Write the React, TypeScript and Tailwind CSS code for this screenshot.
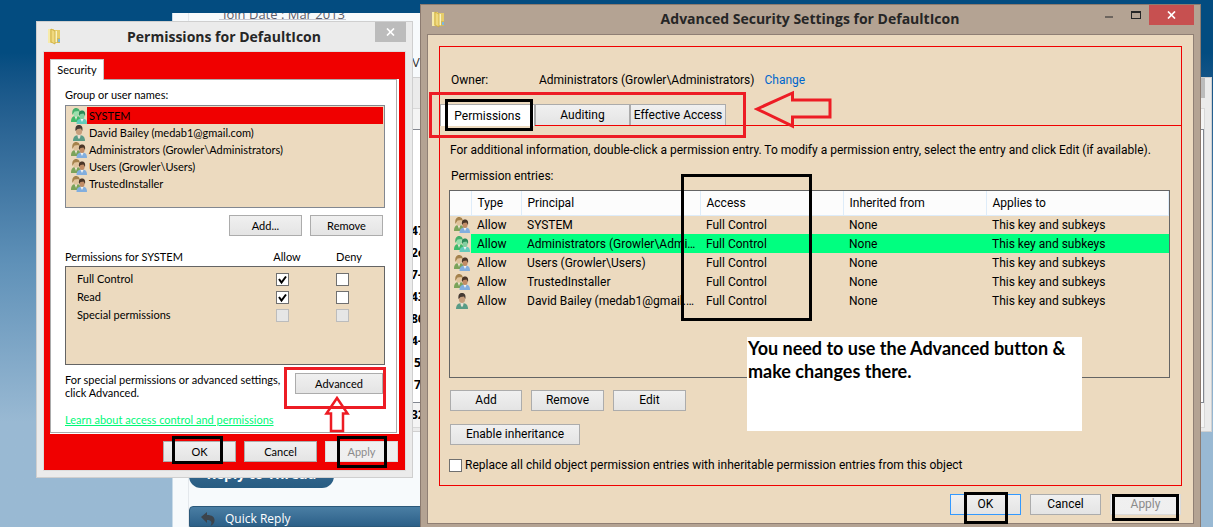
import React from "react"
import { clsx } from "clsx"

const PRINCIPALS = [
  { name: "SYSTEM", tint: "green" },
  { name: "David Bailey (medab1@gmail.com)", single: true },
  { name: "Administrators (Growler\\Administrators)" },
  { name: "Users (Growler\\Users)" },
  { name: "TrustedInstaller" },
]

const PERMISSIONS = [
  { name: "Full Control", allow: true },
  { name: "Read", allow: true },
  { name: "Special permissions", disabled: true },
]

const ENTRIES = [
  { principal: "SYSTEM" },
  { principal: "Administrators (Growler\\Administrators)", selected: true },
  { principal: "Users (Growler\\Users)" },
  { principal: "TrustedInstaller" },
  { principal: "David Bailey (medab1@gmail.com)", single: true },
]

const REGISTRY_VALUES = ["47", "2e", "7-", "43", "86", "4-", " 5", " 7"]

const FolderIcon = () => (
  <svg width="14" height="17" viewBox="0 0 14 17" aria-hidden="true">
    <path d="M1 1h6v14H1z" fill="#ecd77c" />
    <path d="M1 1h2v14H1z" fill="#f7ebaa" />
    <path d="M7 2h6v13H7z" fill="#e6cd6a" />
    <path d="M8 3h2v11H8z" fill="#fbf3c0" />
    <path d="M4 1l4 2v13l-4-2z" fill="#f0d97e" stroke="#c9a83b" strokeWidth=".8" />
    <path d="M10 10h3v5h-3z" fill="#d3b95a" />
    <path d="M11 11h2v3h-2z" fill="#7fb7dc" />
  </svg>
)

interface UserIconProps {
  single?: boolean
  green?: boolean
}

const UserIcon: React.FC<UserIconProps> = ({ single, green }) =>
  single ? (
    <svg width="16" height="16" viewBox="0 0 16 16" aria-hidden="true">
      <path d="M2 16c0-4 2-6 6-6s6 2 6 6z" fill="#5a9c86" />
      <path d="M6 9h4l-1 4-1 1-1-1z" fill="#e8e0d2" />
      <ellipse cx="8" cy="5.500" rx="3.200" ry="4.500" fill="#c79f7d" />
      <path d="M4.500 6C4 1.500 5.500 0 8 0c3 0 4 2.500 3.300 6L10 3.500 6.500 4z" fill="#453a33" />
    </svg>
  ) : (
    <svg width="16" height="16" viewBox="0 0 16 16" aria-hidden="true">
      <path d="M0 14c0-5 2-6 5-6s5 1 5 6z" fill={green ? "#3fb968" : "#7ba35a"} />
      <path d="M3.500 8h3l-1.500 4z" fill="#eee7d8" />
      <ellipse cx="5" cy="4.800" rx="2.800" ry="4" fill={green ? "#9be0ac" : "#e0c39c"} />
      <path d="M1.300 7C.8 2 2.500 0 5 0s4.500 2 3.700 6L7.500 3 3.500 3.500z" fill={green ? "#45b06c" : "#a5824c"} />
      <path d="M5.500 16c0-4 2-5.500 5.500-5.500s5 1.500 5 5.500z" fill={green ? "#62cbbb" : "#82aede"} />
      <path d="M9.500 11h3L11 14z" fill="#f2f2f2" />
      <ellipse cx="11" cy="7.500" rx="2.600" ry="3.600" fill={green ? "#83cfa0" : "#c18c66"} />
      <path d="M8 8c-.6-4 .8-5.500 3-5.500s3.700 1.500 3 5.500l-1.500-2.500-3 .5z" fill={green ? "#2b8a58" : "#4a3628"} />
    </svg>
  )

const CloseIcon = () => (
  <svg width="9" height="8" viewBox="0 0 9 8" aria-hidden="true">
    <path d="M1 .5l7 7M8 .5l-7 7" stroke="#fff" strokeWidth="1.700" />
  </svg>
)

const DialogButton: React.FC<React.ComponentProps<"button">> = ({
  className,
  ...props
}) => (
  <button
    type="button"
    className={clsx(
      "h-[21px] shrink-0 border bg-linear-to-b from-[#f0f0f0] to-[#e4e4e4] text-center leading-[19px] disabled:border-[#dadada] disabled:from-[#f0f0f0] disabled:to-[#efefef] disabled:text-[#8b8b8b]",
      className
    )}
    {...props}
  />
)

const Checkbox: React.FC<React.ComponentProps<"input">> = (props) => (
  <span className="relative block size-[13px] shrink-0">
    <input
      type="checkbox"
      className="peer block size-[13px] appearance-none border border-[#707070] bg-white disabled:border-[#bcbcbc] disabled:bg-[#e6e6e6]"
      {...props}
    />
    <svg
      viewBox="0 0 13 13"
      className="pointer-events-none absolute inset-0 hidden peer-checked:block"
      aria-hidden="true"
    >
      <path d="M3 6l2.500 3.500L10 3.500" fill="none" stroke="#000" strokeWidth="2" />
    </svg>
  </span>
)

const ForumPage = () => (
  <div className="absolute top-[13px] right-3 bottom-0 left-[172px] overflow-hidden border-l border-[#c9dbe8] bg-[#f7fafc] font-['Open_Sans',sans-serif]">
    <div className="ml-[15px] flex h-full flex-col border-l border-[#e4e8ec]">
      <div className="ml-[30px] h-[7px] w-[127px] overflow-hidden border-b border-[#c8c8d0]">
        <p className="-mt-1.5 ml-1 text-[13px] leading-[14px] whitespace-nowrap text-[#5d5d6b]">
          Join Date : Mar 2013
        </p>
      </div>
      <p className="mt-[34px] ml-[223px] text-[13px] leading-4 text-[#333]">View</p>
      <button
        type="button"
        className="mt-auto h-7 w-[145px] rounded-b-xl bg-linear-to-b from-[#3b6f97] to-[#285c82] text-sm leading-3 font-bold text-white"
      >
        Reply to Thread
      </button>
      <div className="mt-[18px] flex h-[21px] shrink-0 items-center gap-2.5 rounded-t border border-[#2b5879] bg-linear-to-b from-[#4a7ea4] to-[#2c6088] pt-1 pl-[11px] text-xs text-white">
        <svg width="14" height="14" viewBox="0 0 14 14" aria-hidden="true">
          <path d="M0 5l6-5v3c5 0 8 2 7.500 6-.3 2.500-2 4-4 5 2-3.500 1-6-3.500-6v3z" fill="#3c444c" />
        </svg>
        <span>Quick Reply</span>
      </div>
    </div>
  </div>
)

const RegistryWindow = () => (
  <div className="absolute top-[77px] right-px left-[300px] flex h-[355px] flex-col border border-[#d0d0d0] bg-[#ebebeb] font-['Open_Sans',sans-serif] text-xs">
    <div className="flex h-[30px] shrink-0 justify-end pr-1.5">
      <div className="h-5 w-8 bg-[#bcbcbc]" />
    </div>
    <div className="mr-1.5 flex grow flex-col border border-[#d8d8d8] bg-[#f4f4f4]">
      <div className="mt-5 h-[274px] border border-[#828790] bg-white pt-[90px] pl-[108px] font-bold">
        {REGISTRY_VALUES.map((value) => (
          <p key={value} className="leading-[22px] whitespace-pre">
            {value}
          </p>
        ))}
      </div>
      <p className="pl-[109px] leading-6 font-bold">32</p>
    </div>
    <div className="h-1.5" />
  </div>
)

const PermissionsWindow = () => (
  <section className="absolute top-[21px] left-[36px] w-[377px] border border-[#cfcfcf] bg-[#ebebeb] font-['Lato',sans-serif] text-[11px] text-black">
    <header className="flex h-[29px] items-center pl-2.5">
      <FolderIcon />
      <h1 className="grow pl-3 text-center font-['Open_Sans',sans-serif] text-[14px] font-bold text-[#262626]">
        Permissions for DefaultIcon
      </h1>
      <button
        type="button"
        aria-label="Close"
        className="mr-1.5 flex h-5 w-[31px] items-center justify-center self-start bg-[#bcbcbc]"
      >
        <CloseIcon />
      </button>
    </header>

    <div className="mx-1.5 mb-1.5 border border-[#dcdcdc] bg-[#f00000] px-1.5 pt-[7px] pb-2">
      <div role="tablist" className="relative -mb-px">
        <button
          type="button"
          role="tab"
          aria-selected="true"
          className="block h-[21px] w-[54px] border border-b-0 border-[#c9c9c9] bg-white"
        >
          Security
        </button>
      </div>
      <div className="bg-white pr-0.5 pb-px">
        <div className="border border-[#ababab] pt-2 pr-[11px] pb-[5px] pl-3.5">
          <p className="leading-[14px]">Group or user names:</p>
          <ul className="mt-[3px] h-[103px] border border-[#828790] bg-[#ecdabf] py-px pr-px pl-[5px]">
            {PRINCIPALS.map(({ name, single, tint }) => (
              <li key={name} className="flex h-[17px] items-center">
                <UserIcon single={single} green={tint === "green"} />
                <span className={clsx("grow pl-0.5 leading-[17px]", tint && "bg-[#f00000]")}>
                  {name}
                </span>
              </li>
            ))}
          </ul>
          <div className="mt-[7px] flex justify-end gap-2 pr-0.5">
            <DialogButton className="w-[73px] border-[#acacac]">Add...</DialogButton>
            <DialogButton className="w-[73px] border-[#acacac]">Remove</DialogButton>
          </div>

          <table className="mt-3.5 w-full table-fixed">
            <thead>
              <tr className="h-4 align-top leading-[14px]">
                <th className="text-left font-normal">Permissions for SYSTEM</th>
                <th className="w-[60px] font-normal">Allow</th>
                <th className="w-[68px] pr-1 font-normal">Deny</th>
              </tr>
            </thead>
            <tbody className="bg-[#ecdabf] outline -outline-offset-1 outline-[#646464]">
              <tr className="h-1">
                <td colSpan={3} />
              </tr>
              {PERMISSIONS.map(({ name, allow, disabled }) => (
                <tr key={name} className="h-[18px]">
                  <td className="pl-3">{name}</td>
                  <td className="pl-[19px]">
                    <Checkbox aria-label={`Allow ${name}`} defaultChecked={allow} disabled={disabled} />
                  </td>
                  <td className="pl-[19px]">
                    <Checkbox aria-label={`Deny ${name}`} disabled={disabled} />
                  </td>
                </tr>
              ))}
              <tr className="h-[41px]">
                <td colSpan={3} />
              </tr>
            </tbody>
          </table>

          <div className="mt-2 flex justify-between pr-0.5">
            <p className="leading-[13px]">
              For special permissions or advanced settings,
              <br />
              click Advanced.
            </p>
            <DialogButton className="w-[88px] border-[#acacac]">Advanced</DialogButton>
          </div>
          <a href="#" className="mt-3.5 block leading-[14px] text-[#00f878] underline">
            Learn about access control and permissions
          </a>
        </div>
      </div>
      <div className="mt-[7px] flex justify-end gap-2 pr-px">
        <DialogButton className="w-[73px] border-[#acacac]">OK</DialogButton>
        <DialogButton className="w-[73px] border-[#acacac]">Cancel</DialogButton>
        <DialogButton className="w-[73px]" disabled>
          Apply
        </DialogButton>
      </div>
    </div>

    {/* callouts */}
    <div className="pointer-events-none absolute top-[345px] left-[247px] h-[42px] w-[102px] border-3 border-[#ed1c24]" />
    <svg
      className="pointer-events-none absolute top-[373px] left-[287px]"
      width="26"
      height="38"
      viewBox="0 0 26 38"
      aria-hidden="true"
    >
      <path
        d="M13 3L2.500 18.500H7V36h12V18.500h4.500z"
        fill="none"
        stroke="#ed1c24"
        strokeWidth="2.500"
      />
    </svg>
    <div className="pointer-events-none absolute top-[414px] left-[135px] h-7 w-[51px] border-3 border-black" />
    <div className="pointer-events-none absolute top-[414px] left-[300px] h-8 w-[50px] border-3 border-black" />
  </section>
)

const AdvancedWindow = () => (
  <section className="absolute top-1 right-3 left-[420px] border border-[#8c7b70] bg-[#b4a393] font-['Roboto',sans-serif] text-xs text-black">
    <header className="flex h-[29px] items-center pl-2.5">
      <FolderIcon />
      <h2 className="grow pl-20 text-center font-['Open_Sans',sans-serif] text-[14px] font-bold text-[#262626]">
        Advanced Security Settings for DefaultIcon
      </h2>
      <div className="mr-1.5 flex h-5 self-start">
        <button type="button" aria-label="Minimize" className="flex w-[27px] items-center justify-center pt-1">
          <span className="h-0.5 w-2 bg-[#6d655e]" />
        </button>
        <button type="button" aria-label="Maximize" className="flex w-[27px] items-center justify-center">
          <span className="h-2 w-2.5 border border-t-2 border-[#262626]" />
        </button>
        <button
          type="button"
          aria-label="Close"
          className="flex w-[45px] items-center justify-center bg-[#c75050]"
        >
          <CloseIcon />
        </button>
      </div>
    </header>

    <div className="mx-1.5 mb-1.5 border border-[#8f7f74] bg-[#ecdabf] px-[11px] pt-[11px] pb-2">
      <div className="border border-[#f00000] pt-[25px] pb-3 leading-4">
        <div className="flex pl-[11px]">
          <span className="w-[88px]">Owner:</span>
          <span>Administrators (Growler\Administrators)</span>
          <a href="#" className="ml-2.5 text-[#0066cc]">
            Change
          </a>
        </div>

        <div role="tablist" className="mt-4 flex h-[22px] border-b border-[#f00000]">
          <button
            type="button"
            role="tab"
            aria-selected="true"
            className="-mb-px h-[22px] w-[95px] border border-b-0 border-[#ababab] bg-white"
          >
            Permissions
          </button>
          <button
            type="button"
            role="tab"
            className="w-[95px] border border-b-0 border-[#ababab] bg-linear-to-b from-[#f0f0f0] to-[#e4e4e4]"
          >
            Auditing
          </button>
          <button
            type="button"
            role="tab"
            className="w-24 border border-b-0 border-[#ababab] bg-linear-to-b from-[#f0f0f0] to-[#e4e4e4]"
          >
            Effective Access
          </button>
        </div>

        <p className="mt-4 pl-2.5 whitespace-nowrap">
          For additional information, double-click a permission entry. To modify a permission entry,
          select the entry and click Edit (if available).
        </p>
        <p className="mt-2.5 pl-[11px]">Permission entries:</p>

        <div className="mt-1.5 mr-[11px] ml-[9px] h-[188px] border border-[#646464]">
          <table className="w-full table-fixed text-left">
            <thead className="bg-[#fcfcfc]">
              <tr className="h-6 border-b border-[#deecf9]">
                <th className="w-[21px] border-r border-[#deecf9]" />
                <th className="w-[50px] border-r border-[#deecf9] pl-1.5 font-normal">Type</th>
                <th className="w-[179px] border-r border-[#deecf9] pl-1.5 font-normal">Principal</th>
                <th className="w-[143px] border-r border-[#deecf9] pl-1.5 font-normal">Access</th>
                <th className="w-[143px] border-r border-[#deecf9] pl-1.5 font-normal">Inherited from</th>
                <th className="border-r border-[#deecf9] pl-1.5 font-normal">Applies to</th>
              </tr>
            </thead>
            <tbody>
              {ENTRIES.map(({ principal, selected, single }) => (
                <tr
                  key={principal}
                  className={clsx("h-[19px]", selected && "[&>td:not(:first-child)]:bg-[#00ff80]")}
                >
                  <td className="pl-1">
                    <UserIcon single={single} green={selected} />
                  </td>
                  <td className="pl-1.5">Allow</td>
                  <td className="truncate pr-1 pl-1.5">{principal}</td>
                  <td className="pl-1.5">Full Control</td>
                  <td className="pl-1.5">None</td>
                  <td className="pl-1.5">This key and subkeys</td>
                </tr>
              ))}
            </tbody>
          </table>
        </div>

        <div className="mt-3 flex gap-[9px] pl-2.5">
          <DialogButton className="w-[72px] border-[#acacac]">Add</DialogButton>
          <DialogButton className="w-[73px] border-[#acacac]">Remove</DialogButton>
          <DialogButton className="w-[73px] border-[#acacac]">Edit</DialogButton>
        </div>
        <div className="mt-[13px] flex pl-2.5">
          <DialogButton className="w-[130px] border-[#acacac]">Enable inheritance</DialogButton>
        </div>
        <label className="mt-3 flex items-center gap-[3px] pl-[9px]">
          <Checkbox />
          Replace all child object permission entries with inheritable permission entries from this object
        </label>
      </div>

      <div className="mt-2 flex justify-end gap-[9px] pr-px">
        <DialogButton className="w-[71px] border-[#3399ff]">OK</DialogButton>
        <DialogButton className="w-[71px] border-[#acacac]">Cancel</DialogButton>
        <DialogButton className="w-[71px]" disabled>
          Apply
        </DialogButton>
      </div>
    </div>

    {/* callouts */}
    <div className="pointer-events-none absolute top-[87px] left-2 h-[46px] w-[317px] border-3 border-[#ed1c24]" />
    <div className="pointer-events-none absolute top-[94px] left-6 h-8 w-[88px] border-3 border-black" />
    <svg
      className="pointer-events-none absolute top-[85px] left-[333px]"
      width="80"
      height="40"
      viewBox="0 0 80 40"
      aria-hidden="true"
    >
      <path
        d="M3 19L38.500 3v7H76v17H38.500v9z"
        fill="none"
        stroke="#ed1c24"
        strokeWidth="3"
      />
    </svg>
    <div className="pointer-events-none absolute top-[169px] left-[260px] h-[147px] w-[131px] border-3 border-black" />
    <div className="absolute top-[332px] left-[326px] h-[94px] w-[335px] bg-white pl-px font-['Lato',sans-serif] text-[18px] leading-[23px] font-bold whitespace-nowrap [font-variant-ligatures:none]">
      You need to use the Advanced button &amp;
      <br />
      make changes there.
    </div>
    <div className="pointer-events-none absolute right-48 bottom-1.5 h-8 w-11 border-3 border-black" />
    <div className="pointer-events-none absolute right-[21px] bottom-[9px] h-[27px] w-[67px] border-3 border-black" />
  </section>
)

export default function App() {
  return (
    <main className="relative h-screen overflow-hidden bg-linear-to-b from-[#034c80] from-10% via-[#5f91b8] via-50% to-[#99b9d3] to-80%">
      <ForumPage />
      <RegistryWindow />
      <PermissionsWindow />
      <AdvancedWindow />
    </main>
  )
}
